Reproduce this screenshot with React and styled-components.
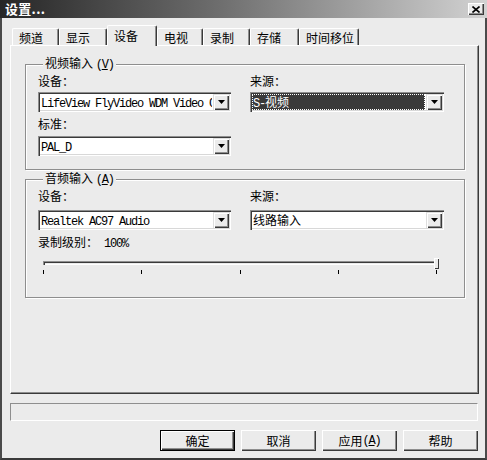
import React from 'react';
import styled, { createGlobalStyle } from 'styled-components';

const FACE = '#ebebeb';
const LIGHT = '#ffffff';
const SHADOW = '#8e8e8e';
const DARK = '#3a3a3a';

const Global = createGlobalStyle`
  html, body { margin: 0; padding: 0; background: ${FACE}; }
  body {
    font-family: "Noto Sans CJK SC", "Liberation Sans", sans-serif;
    font-size: 12px;
    color: #000;
  }
  * { box-sizing: border-box; }
`;

const Window = styled.div`
  width: 487px;
  height: 460px;
  background: ${FACE};
  display: flex;
  flex-direction: column;
  overflow: hidden;
`;

const TitleBar = styled.div`
  height: 18px;
  flex: none;
  display: flex;
  align-items: center;
  justify-content: space-between;
  padding: 0 3px 0 5px;
  background: linear-gradient(to right, #262626 0%, #6e6e6e 45%, #d2d2d2 100%);
`;

const TitleText = styled.span`
  color: #fff;
  font-weight: bold;
  font-size: 13px;
  line-height: 18px;
  letter-spacing: 0.3px;
`;

const CloseBtn = styled.div`
  width: 16px;
  height: 12px;
  background: ${FACE};
  display: flex;
  align-items: center;
  justify-content: center;
  box-shadow: inset 1px 1px 0 ${LIGHT}, inset -1px -1px 0 ${DARK}, inset -2px -2px 0 ${SHADOW};
`;

const Frame = styled.div`
  flex: 1;
  display: flex;
  flex-direction: column;
  border-left: 2px solid #4a4a4a;
  border-right: 2px solid #4a4a4a;
  border-bottom: 2px solid ${DARK};
  padding: 7px 6px 0 8px;
`;

const TabRow = styled.div`
  display: flex;
  align-items: flex-end;
  margin: 0 0 -1px 2px;
  position: relative;
  z-index: 1;
`;

const Tab = styled.div`
  width: ${p => p.$w}px;
  height: ${p => (p.$active ? 21 : 17)}px;
  margin-bottom: ${p => (p.$active ? 0 : 1)}px;
  padding: ${p => (p.$active ? '0 0 1px 6px' : '1px 0 0 6px')};
  display: flex;
  align-items: center;
  line-height: 14px;
  background: ${FACE};
  border-top: 1px solid ${LIGHT};
  border-left: 1px solid ${LIGHT};
  border-right: 1px solid ${DARK};
  border-radius: 2px 2px 0 0;
  box-shadow: inset -1px 0 0 ${SHADOW};
  white-space: nowrap;
`;

const Panel = styled.div`
  height: 349px;
  flex: none;
  border-top: 1px solid ${LIGHT};
  border-left: 1px solid ${LIGHT};
  border-right: 1px solid ${DARK};
  border-bottom: 1px solid ${DARK};
  box-shadow: inset -1px -1px 0 ${SHADOW};
  padding: 10px 13px 0 14px;
  display: flex;
  flex-direction: column;
`;

const Group = styled.fieldset`
  margin: ${p => p.$mt || 0}px 0 0 0;
  padding: 2px 0 ${p => p.$pb}px 12px;
  border: 1px solid ${SHADOW};
  box-shadow: inset 1px 1px 0 ${LIGHT}, 1px 1px 0 ${LIGHT};
  min-width: 0;
`;

const Legend = styled.legend`
  margin-left: 5px;
  padding: 0 2px;
  line-height: 14px;
  background: ${FACE};
`;

const Columns = styled.div`
  display: flex;
  gap: 19px;
`;

const Column = styled.div`
  width: ${p => p.$w}px;
  display: flex;
  flex-direction: column;
`;

const Label = styled.div`
  line-height: 14px;
  height: 14px;
  margin-top: ${p => p.$mt || 0}px;
  white-space: nowrap;
`;

const Lat = styled.span`
  font-family: "Liberation Mono", "DejaVu Sans Mono", monospace;
  font-size: 12px;
  letter-spacing: -1.2px;
  margin-left: ${p => p.$ml || 0}px;
`;

const Key = styled.span`
  text-decoration: underline;
`;

const Combo = styled.div`
  height: 20px;
  margin-top: ${p => p.$mt || 0}px;
  background: #fff;
  display: flex;
  align-items: center;
  padding: 2px;
  box-shadow: inset 1px 1px 0 ${SHADOW}, inset 2px 2px 0 ${DARK}, inset -1px -1px 0 ${LIGHT}, inset -2px -2px 0 #d8d8d8;
`;

const ComboValue = styled.div`
  flex: 1;
  min-width: 0;
  height: 16px;
  line-height: 16px;
  padding-left: 1px;
  overflow: hidden;
  white-space: nowrap;
  background: ${p => (p.$selected ? DARK : 'transparent')};
  color: ${p => (p.$selected ? '#fff' : '#000')};
  outline: ${p => (p.$selected ? '1px dotted #fff' : 'none')};
  outline-offset: -1px;
  margin-right: 1px;
`;

const DropBtn = styled.div`
  width: 16px;
  height: 16px;
  flex: none;
  background: ${FACE};
  display: flex;
  align-items: center;
  justify-content: center;
  box-shadow: inset 1px 1px 0 #dedede, inset 2px 2px 0 ${LIGHT}, inset -1px -1px 0 ${DARK}, inset -2px -2px 0 ${SHADOW};
`;

const Slider = styled.div`
  position: relative;
  width: 406px;
  height: 26px;
  padding: 12px 7px 0 5px;
`;

const Groove = styled.div`
  height: 4px;
  background: ${FACE};
  box-shadow: inset 1px 1px 0 ${SHADOW}, inset 2px 2px 0 ${DARK}, inset -1px -1px 0 ${LIGHT};
`;

const Ticks = styled.div`
  display: flex;
  justify-content: space-between;
  margin-top: 5px;
`;

const Tick = styled.div`
  width: 1px;
  height: 4px;
  background: #000;
`;

const Thumb = styled.div`
  position: absolute;
  top: 9px;
  right: 5px;
  width: 5px;
  height: 11px;
  background: ${FACE};
  box-shadow: inset 1px 1px 0 ${LIGHT}, inset -1px -1px 0 ${DARK};
`;

const StatusBox = styled.div`
  height: 18px;
  margin: 9px 1px 0 0;
  border-top: 1px solid ${SHADOW};
  border-left: 1px solid ${SHADOW};
  border-bottom: 1px solid ${LIGHT};
  border-right: 1px solid ${LIGHT};
`;

const ButtonRow = styled.div`
  display: flex;
  justify-content: flex-end;
  gap: 6px;
  margin: 9px 1px 0 0;
`;

const Button = styled.div`
  width: 75px;
  height: 21px;
  display: flex;
  align-items: center;
  justify-content: center;
  background: ${FACE};
  line-height: 14px;
  border: ${p => (p.$default ? '1px solid #000' : 'none')};
  box-shadow: inset 1px 1px 0 ${LIGHT}, inset -1px -1px 0 ${DARK}, inset -2px -2px 0 ${SHADOW};
`;

const Arrow = () => (
  <svg width="7" height="4" viewBox="0 0 7 4">
    <polygon points="0,0 7,0 3.5,4" fill="#000" />
  </svg>
);

const ComboBox = ({ children, selected, mt }) => (
  <Combo $mt={mt}>
    <ComboValue $selected={selected}>{children}</ComboValue>
    <DropBtn><Arrow /></DropBtn>
  </Combo>
);

const tabs = [
  { label: '频道', w: 47 },
  { label: '显示', w: 48 },
  { label: '设备', w: 50, active: true },
  { label: '电视', w: 46 },
  { label: '录制', w: 47 },
  { label: '存储', w: 49 },
  { label: '时间移位', w: 60 },
];

export default function App() {
  return (
    <>
      <Global />
      <Window>
        <TitleBar>
          <TitleText>设置...</TitleText>
          <CloseBtn>
            <svg width="8" height="7" viewBox="0 0 8 7">
              <path d="M0.5 0.5 L7.5 6.5 M7.5 0.5 L0.5 6.5" stroke="#000" strokeWidth="1.6" />
            </svg>
          </CloseBtn>
        </TitleBar>
        <Frame>
          <TabRow>
            {tabs.map(t => (
              <Tab key={t.label} $w={t.w} $active={t.active}>{t.label}</Tab>
            ))}
          </TabRow>
          <Panel>
            <Group $pb={13}>
              <Legend>视频输入 <Lat>(<Key>V</Key>)</Lat></Legend>
              <Columns>
                <Column $w={193}>
                  <Label>设备：</Label>
                  <ComboBox mt={4}><Lat>LifeView FlyVideo WDM Video Capture</Lat></ComboBox>
                  <Label $mt={5}>标准：</Label>
                  <ComboBox mt={5}><Lat>PAL_D</Lat></ComboBox>
                </Column>
                <Column $w={194}>
                  <Label>来源：</Label>
                  <ComboBox mt={4} selected><Lat>S-</Lat>视频</ComboBox>
                </Column>
              </Columns>
            </Group>
            <Group $mt={1} $pb={22}>
              <Legend>音频输入 <Lat>(<Key>A</Key>)</Lat></Legend>
              <Columns>
                <Column $w={193}>
                  <Label>设备：</Label>
                  <ComboBox mt={7}><Lat>Realtek AC97 Audio</Lat></ComboBox>
                </Column>
                <Column $w={194}>
                  <Label>来源：</Label>
                  <ComboBox mt={7}>线路输入</ComboBox>
                </Column>
              </Columns>
              <Label $mt={5}>录制级别：<Lat $ml={6}>100%</Lat></Label>
              <Slider>
                <Groove />
                <Ticks>
                  <Tick /><Tick /><Tick /><Tick /><Tick />
                </Ticks>
                <Thumb />
              </Slider>
            </Group>
          </Panel>
          <StatusBox />
          <ButtonRow>
            <Button $default>确定</Button>
            <Button>取消</Button>
            <Button>应用<Lat>(<Key>A</Key>)</Lat></Button>
            <Button>帮助</Button>
          </ButtonRow>
        </Frame>
      </Window>
    </>
  );
}
